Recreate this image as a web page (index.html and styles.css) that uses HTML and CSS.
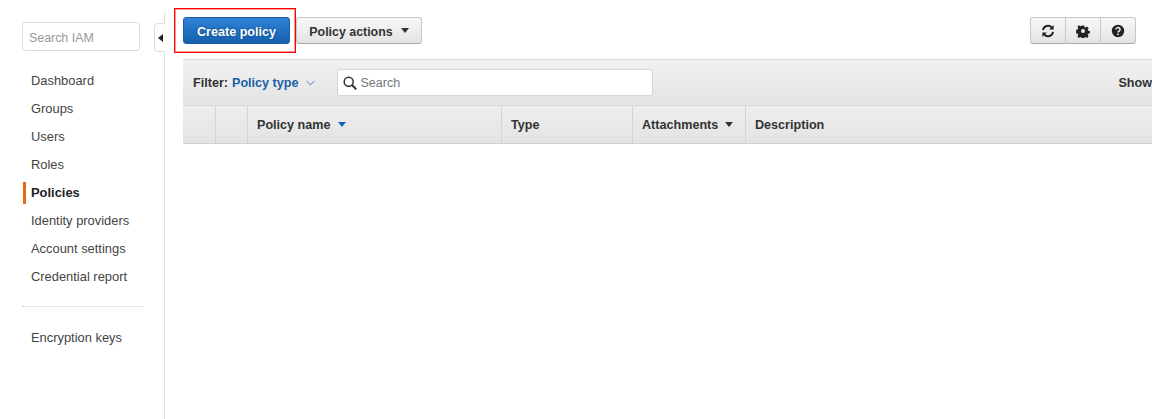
FILE: index.html
```html
<!DOCTYPE html>
<html lang="en">
<head>
<meta charset="utf-8">
<title>Policies</title>
<link rel="stylesheet" href="styles.css">
</head>
<body>
<div class="page">
  <aside class="sidebar">
    <input class="side-search" type="text" placeholder="Search IAM">
    <nav class="nav">
      <a class="nav-item">Dashboard</a>
      <a class="nav-item">Groups</a>
      <a class="nav-item">Users</a>
      <a class="nav-item">Roles</a>
      <a class="nav-item active">Policies</a>
      <a class="nav-item">Identity providers</a>
      <a class="nav-item">Account settings</a>
      <a class="nav-item">Credential report</a>
    </nav>
    <div class="nav-sep"></div>
    <a class="nav-item">Encryption keys</a>
    <div class="collapse"><span class="collapse-arrow"></span></div>
  </aside>
  <main class="main">
    <div class="toolbar">
      <div class="highlight-wrap">
        <button class="btn primary">Create policy</button>
        <div class="highlight"></div>
      </div>
      <button class="btn actions">Policy actions<span class="caret"></span></button>
      <div class="btn-group">
        <button class="btn icon" aria-label="Refresh">
          <svg width="14" height="14" viewBox="0 0 14 14"><path d="M2 6.200A5 5 0 0 1 10.800 3.600" fill="none" stroke="#222" stroke-width="1.900"/><path d="M12.600 1v4.400H8.200z" fill="#222"/><path d="M12 7.800A5 5 0 0 1 3.200 10.400" fill="none" stroke="#222" stroke-width="1.900"/><path d="M1.400 13V8.600h4.400z" fill="#222"/></svg>
        </button>
        <button class="btn icon" aria-label="Settings">
          <svg width="14" height="14" viewBox="0 0 14 14"><path fill="#222" fill-rule="evenodd" d="M5.700.8h2.600l.4 1.900 1.200.5 1.600-1.100 1.800 1.800-1.100 1.600.5 1.200 1.900.4v2.600l-1.900.4-.5 1.200 1.100 1.600-1.800 1.800-1.600-1.100-1.200.5-.4 1.900H5.700l-.4-1.900-1.200-.5-1.600 1.100-1.800-1.800 1.100-1.600-.5-1.200-1.900-.4V5.500l1.900-.4.500-1.200-1.100-1.600 1.800-1.800 1.600 1.100 1.200-.5zM7 4.800a2.200 2.200 0 1 0 0 4.400 2.200 2.200 0 0 0 0-4.400z" transform="translate(.7 .7) scale(.9)"/></svg>
        </button>
        <button class="btn icon" aria-label="Help">
          <svg width="14" height="14" viewBox="0 0 14 14"><circle cx="7" cy="7" r="6.200" fill="#222"/><path d="M4.900 5.400a2.100 1.900 0 1 1 3.300 1.600c-.8.500-1.200.8-1.200 1.600" fill="none" stroke="#eee" stroke-width="1.500"/><rect x="6.200" y="9.500" width="1.600" height="1.600" fill="#eee"/></svg>
        </button>
      </div>
    </div>
    <div class="filter-bar">
      <span class="filter-label">Filter:</span>
      <span class="filter-value">Policy type</span>
      <svg class="chev" width="9" height="6" viewBox="0 0 9 6"><path d="M.7 1l3.800 3.800L8.300 1" fill="none" stroke="#3f7fc0" stroke-width="1"/></svg>
      <div class="search">
        <svg width="14" height="14" viewBox="0 0 14 14"><circle cx="5.700" cy="5.700" r="4.500" fill="none" stroke="#333" stroke-width="1.500"/><path d="M9 9l4.200 4.200" stroke="#333" stroke-width="2"/></svg>
        <span class="search-text">Search</span>
      </div>
      <span class="show">Show</span>
    </div>
    <div class="table-head">
      <div class="th w-check-a"></div>
      <div class="th w-check-b"></div>
      <div class="th w-name">Policy name<span class="caret blue"></span></div>
      <div class="th w-type">Type</div>
      <div class="th w-att">Attachments<span class="caret"></span></div>
      <div class="th w-desc">Description</div>
    </div>
  </main>
</div>
</body>
</html>
```

FILE: styles.css
```css
* { box-sizing: border-box; }
html, body { margin: 0; padding: 0; background: #fff; overflow: hidden; }
body { font-family: "Liberation Sans", Arial, sans-serif; font-size: 13px; color: #444; }
.page { display: flex; height: 419px; width: 1152px; overflow: hidden; }

.sidebar {
  position: relative;
  width: 165px;
  flex: none;
  margin-top: 13px;
  padding: 9px 0 0 22px;
  border-right: 1px solid #ddd;
}
.side-search {
  display: block;
  width: 118px;
  height: 29px;
  padding: 2px 6px 0;
  border: 1px solid #ddd;
  border-radius: 3px;
  font: 12.400px "Liberation Sans", Arial, sans-serif;
  background: #fff;
}
.side-search::placeholder { color: #999; opacity: 1; }
.nav { margin-top: 16px; }
.nav-item {
  display: block;
  height: 28px;
  line-height: 28px;
  padding-left: 9px;
  color: #444;
  font-size: 12.900px;
}
.nav-item.active {
  font-weight: 700;
  color: #222;
  position: relative;
}
.nav-item.active::before {
  content: "";
  position: absolute;
  left: 1px;
  top: 3px;
  bottom: 3px;
  width: 3px;
  background: #e66a12;
}
.nav-sep {
  width: 122px;
  margin: 15px 0 17px;
  border-top: 1px dotted #ccc;
}
.collapse {
  position: absolute;
  right: -1px;
  top: 10px;
  width: 11px;
  height: 29px;
  background: #fff;
  border: 1px solid #ddd;
  border-right: 1px solid #fff;
  border-radius: 4px 0 0 4px;
  display: flex;
  align-items: center;
  justify-content: center;
}
.collapse-arrow {
  width: 0;
  height: 0;
  border-top: 4px solid transparent;
  border-bottom: 4px solid transparent;
  border-right: 5px solid #222;
  margin-left: 2px;
}

.main { flex: 1; min-width: 0; padding: 17px 0 0 18px; }
.toolbar { display: flex; align-items: flex-start; height: 42px; }
.btn {
  height: 27px;
  padding: 2px 0 0;
  font: 700 12.600px "Liberation Sans", Arial, sans-serif;
  color: #333;
  border: 1px solid #c8c8c8;
  border-bottom-color: #aaa;
  border-radius: 3px;
  background: linear-gradient(#f8f8f8, #e3e3e3);
  display: inline-flex;
  align-items: center;
  justify-content: center;
}
.primary {
  width: 107px;
  color: #fff;
  border-color: #1a5da6;
  background: linear-gradient(#2f83d6, #1560ae);
  text-shadow: 0 0 2px #0d3f78;
}
.highlight-wrap { position: relative; margin-right: 6px; height: 27px; }
.highlight {
  position: absolute;
  left: -9px;
  top: -9px;
  width: 122px;
  height: 45px;
  border: 1px solid #f00;
  box-shadow: inset 0 0 0 1px rgba(255, 0, 0, .4);
  pointer-events: none;
}
.caret {
  display: inline-block;
  width: 0;
  height: 0;
  margin-left: 7px;
  border-left: 4.500px solid transparent;
  border-right: 4.500px solid transparent;
  border-top: 5px solid #333;
}
.caret.blue { border-top-color: #1166bb; }
.actions { width: 126px; font-size: 12.400px; }
.actions .caret { margin-left: 8px; margin-top: -2px; }
.btn-group { display: flex; margin-left: 608px; }
.btn.icon { width: 35px; padding: 0; border-radius: 0; border-left-width: 0; }
.btn.icon:first-child { width: 36px; border-left-width: 1px; border-radius: 3px 0 0 3px; }
.btn.icon:last-child { border-radius: 0 3px 3px 0; }

.filter-bar {
  display: flex;
  align-items: center;
  height: 47px;
  padding-left: 10px;
  font-size: 12.600px;
  background: linear-gradient(#f1f1f1, #e4e4e4);
  border-top: 1px solid #ddd;
  border-bottom: 1px solid #d8d8d8;
  white-space: nowrap;
  overflow: hidden;
}
.filter-label { font-weight: 700; color: #333; }
.filter-value { font-weight: 700; color: #1a5fa8; margin-left: 4px; }
.chev { margin: 0 0 0 8px; }
.search {
  display: flex;
  align-items: center;
  gap: 3px;
  width: 316px;
  height: 27px;
  margin-left: 22px;
  padding-left: 5px;
  background: #fff;
  border: 1px solid #d5d5d5;
  border-radius: 3px;
}
.search-text { color: #777; font-size: 12.500px; }
.show { font-weight: 700; color: #333; margin-left: 465px; }

.table-head {
  display: flex;
  height: 38px;
  font-size: 12.600px;
  background: linear-gradient(#eeeeee, #e3e3e3);
  border-bottom: 1px solid #d0d0d0;
}
.th {
  display: flex;
  align-items: center;
  padding-left: 9px;
  font-weight: 700;
  color: #333;
  border-right: 1px solid #d4d4d4;
  white-space: nowrap;
}
.w-check-a { width: 33px; }
.w-check-b { width: 32px; }
.w-name { width: 254px; }
.w-type { width: 131px; }
.w-att { width: 113px; }
.w-desc { flex: 1; border-right: 0; }
```
